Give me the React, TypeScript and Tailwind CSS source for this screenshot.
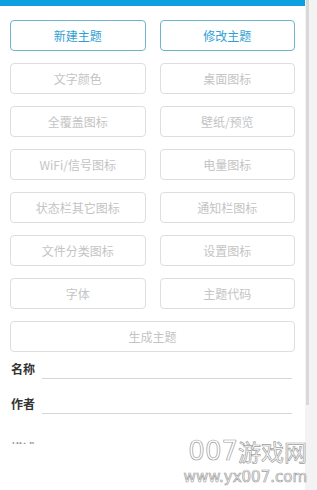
import React from "react";

const rows: [string, string][] = [
  ["文字颜色", "桌面图标"],
  ["全覆盖图标", "壁纸/预览"],
  ["WiFi/信号图标", "电量图标"],
  ["状态栏其它图标", "通知栏图标"],
  ["文件分类图标", "设置图标"],
  ["字体", "主题代码"],
];

const font = { fontFamily: '"Noto Sans CJK SC", "Noto Sans", sans-serif' };

function Btn({ label, active }: { label: string; active?: boolean }) {
  return (
    <div
      className={
        active
          ? "h-[31px] flex items-center justify-center rounded-[4px] border border-[#6fb4cc] text-[12px] text-[#2f9fd3]"
          : "h-[31px] flex items-center justify-center rounded-[4px] border border-[#dedede] text-[12px] text-[#c4c4c4]"
      }
    >
      {label}
    </div>
  );
}

function Field({ label, dim }: { label: string; dim?: boolean }) {
  return (
    <div className="flex items-end h-[18px]">
      <span
        className={
          dim
            ? "w-[31px] text-[12px] font-bold text-[#999] leading-[16px] self-start"
            : "w-[31px] text-[12px] font-bold text-[#333] leading-[16px] self-start"
        }
      >
        {label}
      </span>
      <div className="flex-1 border-b border-[#d6d6d6] h-full" />
    </div>
  );
}

export default function App() {
  return (
    <div className="relative w-[317px] h-[490px] bg-white overflow-hidden flex" style={font}>
      <div className="w-[305px] flex flex-col">
        <div className="h-[6px] bg-[#0a9fe0]" />
        <div className="h-[438px] overflow-hidden">
          <div className="px-[10px] pt-[14px] grid grid-cols-2 gap-x-[14px] gap-y-[12px]">
            <Btn label="新建主题" active />
            <Btn label="修改主题" active />
            {rows.map(([a, b]) => (
              <React.Fragment key={a}>
                <Btn label={a} />
                <Btn label={b} />
              </React.Fragment>
            ))}
            <div className="col-span-2">
              <Btn label="生成主题" />
            </div>
          </div>
          <div className="pl-[11px] pr-[13px] mt-[9px] flex flex-col">
            <Field label="名称" />
            <div className="h-[17px]" />
            <Field label="作者" />
            <div className="h-[26px]" />
            <Field label="描述" dim />
          </div>
        </div>
      </div>
      <div className="w-[12px] bg-[#f3f3f3] flex">
        <div className="ml-[1px] w-[3px] h-[405px] bg-[#d9d9d9]" />
      </div>
      <div className="absolute right-[10px] top-[436px] flex flex-col items-end text-transparent [-webkit-text-stroke:0.7px_#a0a0a0]">
        <div className="flex items-end leading-[30px]">
          <span className="text-[26px]" style={{ fontFamily: '"DejaVu Sans", sans-serif' }}>007</span>
          <span className="text-[23px]" style={{ fontFamily: '"Noto Sans CJK SC", sans-serif' }}>游戏网</span>
        </div>
        <span className="text-[15px] leading-[18px] mt-[2px]" style={{ fontFamily: '"DejaVu Sans", sans-serif' }}>www.yx007.com</span>
      </div>
    </div>
  );
}
